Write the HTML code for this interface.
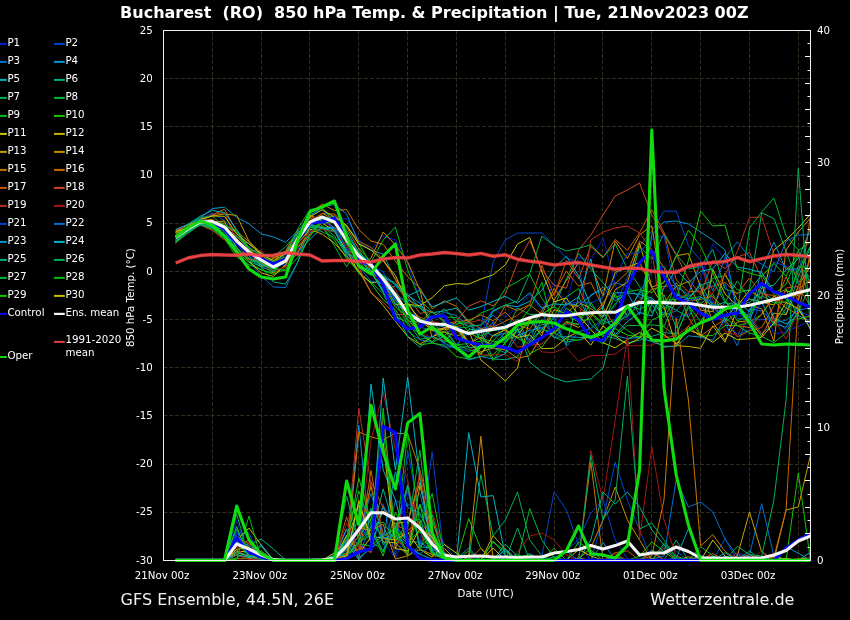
<!DOCTYPE html>
<html lang="en"><head><meta charset="utf-8"><title>Bucharest (RO) 850 hPa Temp. &amp; Precipitation</title>
<style>html,body{margin:0;padding:0;background:#000;overflow:hidden}body{width:850px;height:620px;position:relative}</style></head>
<body>
<svg width="850" height="620" viewBox="0 0 850 620" style="position:absolute;left:0;top:0;will-change:transform">
<rect width="850" height="620" fill="#000"/>
<g stroke="#312f20" stroke-width="1" stroke-dasharray="3.9,2" fill="none"><line x1="212.5" y1="30.5" x2="212.5" y2="560.4"/><line x1="261.5" y1="30.5" x2="261.5" y2="560.4"/><line x1="309.5" y1="30.5" x2="309.5" y2="560.4"/><line x1="358.5" y1="30.5" x2="358.5" y2="560.4"/><line x1="407.5" y1="30.5" x2="407.5" y2="560.4"/><line x1="456.5" y1="30.5" x2="456.5" y2="560.4"/><line x1="505.5" y1="30.5" x2="505.5" y2="560.4"/><line x1="554.5" y1="30.5" x2="554.5" y2="560.4"/><line x1="602.5" y1="30.5" x2="602.5" y2="560.4"/><line x1="651.5" y1="30.5" x2="651.5" y2="560.4"/><line x1="700.5" y1="30.5" x2="700.5" y2="560.4"/><line x1="749.5" y1="30.5" x2="749.5" y2="560.4"/><line x1="798.5" y1="30.5" x2="798.5" y2="560.4"/><line x1="163.5" y1="512.5" x2="810.5" y2="512.5"/><line x1="163.5" y1="464.5" x2="810.5" y2="464.5"/><line x1="163.5" y1="415.5" x2="810.5" y2="415.5"/><line x1="163.5" y1="367.5" x2="810.5" y2="367.5"/><line x1="163.5" y1="319.5" x2="810.5" y2="319.5"/><line x1="163.5" y1="271.5" x2="810.5" y2="271.5"/><line x1="163.5" y1="223.5" x2="810.5" y2="223.5"/><line x1="163.5" y1="175.5" x2="810.5" y2="175.5"/><line x1="163.5" y1="126.5" x2="810.5" y2="126.5"/><line x1="163.5" y1="78.5" x2="810.5" y2="78.5"/></g>
<defs><clipPath id="c"><rect x="163.5" y="30.5" width="647.0" height="531.5"/></clipPath></defs>
<g clip-path="url(#c)" fill="none" stroke-linejoin="round" stroke-linecap="butt">
<polyline points="175.7,242.3 187.9,231.9 200.1,225.4 212.3,224.8 224.5,229.8 236.7,240.9 249.0,246.7 261.2,258.3 273.4,266.4 285.6,264.6 297.8,249.2 310.0,232.8 322.2,220.4 334.4,218.4 346.6,218.8 358.8,239.6 371.0,250.0 383.2,236.0 395.4,240.0 407.7,262.0 419.9,300.0 432.1,324.6 444.3,346.2 456.5,345.3 468.7,331.8 480.9,333.0 493.1,308.0 505.3,317.5 517.5,307.4 529.7,294.7 541.9,310.1 554.1,282.7 566.4,303.6 578.6,257.0 590.8,260.5 603.0,238.3 615.2,284.9 627.4,319.3 639.6,301.2 651.8,306.1 664.0,313.1 676.2,317.7 688.4,313.7 700.6,278.5 712.8,244.5 725.0,258.8 737.3,314.6 749.5,317.3 761.7,301.9 773.9,334.0 786.1,331.8 798.3,326.3 810.5,321.5" stroke="#0020d0" stroke-width="1" />
<polyline points="175.7,235.0 187.9,227.0 200.1,219.9 212.3,212.9 224.5,220.6 236.7,233.8 249.0,249.8 261.2,252.5 273.4,261.6 285.6,265.7 297.8,253.8 310.0,233.0 322.2,221.7 334.4,218.6 346.6,239.8 358.8,260.8 371.0,266.6 383.2,271.6 395.4,297.9 407.7,299.1 419.9,327.1 432.1,330.3 444.3,337.3 456.5,344.4 468.7,333.1 480.9,327.6 493.1,262.0 505.3,240.0 517.5,233.0 529.7,233.0 541.9,233.0 554.1,245.0 566.4,258.0 578.6,262.0 590.8,341.6 603.0,316.5 615.2,306.3 627.4,277.5 639.6,246.0 651.8,231.1 664.0,211.1 676.2,211.1 688.4,245.6 700.6,260.7 712.8,307.2 725.0,283.6 737.3,318.3 749.5,320.0 761.7,319.7 773.9,318.9 786.1,329.7 798.3,311.0 810.5,316.1" stroke="#0048d0" stroke-width="1" />
<polyline points="175.7,238.9 187.9,228.3 200.1,221.6 212.3,221.8 224.5,232.1 236.7,246.9 249.0,261.2 261.2,276.0 273.4,287.0 285.6,287.5 297.8,262.0 310.0,222.2 322.2,217.6 334.4,230.9 346.6,253.3 358.8,264.8 371.0,272.3 383.2,292.0 395.4,316.3 407.7,331.1 419.9,339.8 432.1,342.5 444.3,346.9 456.5,347.3 468.7,351.6 480.9,346.3 493.1,321.5 505.3,342.1 517.5,326.6 529.7,340.1 541.9,311.7 554.1,338.0 566.4,324.1 578.6,323.6 590.8,294.7 603.0,289.8 615.2,282.7 627.4,286.3 639.6,297.5 651.8,299.4 664.0,314.9 676.2,311.1 688.4,296.4 700.6,287.9 712.8,310.8 725.0,323.2 737.3,345.8 749.5,308.8 761.7,310.9 773.9,322.9 786.1,320.2 798.3,310.1 810.5,307.8" stroke="#0070d0" stroke-width="1" />
<polyline points="175.7,229.9 187.9,225.6 200.1,218.3 212.3,208.5 224.5,207.2 236.7,217.3 249.0,223.8 261.2,233.9 273.4,237.0 285.6,242.2 297.8,231.1 310.0,216.2 322.2,207.0 334.4,204.5 346.6,214.0 358.8,243.2 371.0,250.2 383.2,254.2 395.4,279.6 407.7,295.7 419.9,303.0 432.1,324.0 444.3,327.0 456.5,345.4 468.7,329.7 480.9,329.0 493.1,336.1 505.3,333.2 517.5,329.5 529.7,341.4 541.9,328.8 554.1,318.3 566.4,302.9 578.6,305.7 590.8,295.7 603.0,287.2 615.2,300.9 627.4,292.8 639.6,314.9 651.8,235.0 664.0,222.0 676.2,221.0 688.4,224.0 700.6,232.0 712.8,240.0 725.0,250.0 737.3,312.1 749.5,317.6 761.7,334.1 773.9,323.4 786.1,327.4 798.3,304.9 810.5,330.1" stroke="#0098d0" stroke-width="1" />
<polyline points="175.7,237.2 187.9,228.7 200.1,223.3 212.3,224.1 224.5,225.7 236.7,239.8 249.0,253.9 261.2,263.2 273.4,266.9 285.6,262.3 297.8,251.6 310.0,239.4 322.2,227.3 334.4,227.4 346.6,237.5 358.8,257.9 371.0,271.7 383.2,291.1 395.4,285.6 407.7,299.8 419.9,306.2 432.1,312.8 444.3,310.9 456.5,308.1 468.7,322.9 480.9,339.6 493.1,310.6 505.3,305.1 517.5,306.7 529.7,301.5 541.9,290.1 554.1,268.0 566.4,256.3 578.6,275.9 590.8,305.8 603.0,316.0 615.2,292.7 627.4,292.8 639.6,294.4 651.8,298.1 664.0,308.8 676.2,294.7 688.4,298.9 700.6,283.6 712.8,306.6 725.0,321.1 737.3,302.4 749.5,311.6 761.7,284.6 773.9,318.2 786.1,323.9 798.3,315.6 810.5,321.7" stroke="#00b4c4" stroke-width="1" />
<polyline points="175.7,239.4 187.9,232.0 200.1,223.6 212.3,222.4 224.5,230.8 236.7,251.4 249.0,258.8 261.2,266.7 273.4,282.0 285.6,284.0 297.8,262.0 310.0,234.3 322.2,220.0 334.4,221.4 346.6,229.9 358.8,252.7 371.0,268.6 383.2,275.2 395.4,283.4 407.7,294.3 419.9,307.9 432.1,320.2 444.3,336.9 456.5,347.5 468.7,346.6 480.9,331.8 493.1,358.9 505.3,359.7 517.5,356.7 529.7,333.1 541.9,324.6 554.1,323.3 566.4,344.8 578.6,296.4 590.8,324.4 603.0,335.1 615.2,338.5 627.4,343.1 639.6,340.1 651.8,336.3 664.0,332.6 676.2,333.7 688.4,308.0 700.6,304.9 712.8,320.5 725.0,302.5 737.3,304.9 749.5,302.4 761.7,292.0 773.9,300.2 786.1,314.3 798.3,277.1 810.5,247.2" stroke="#00b088" stroke-width="1" />
<polyline points="175.7,231.9 187.9,225.1 200.1,221.5 212.3,221.5 224.5,227.8 236.7,237.3 249.0,243.6 261.2,252.8 273.4,262.2 285.6,261.0 297.8,246.8 310.0,230.7 322.2,221.0 334.4,221.7 346.6,242.9 358.8,257.1 371.0,272.2 383.2,289.8 395.4,301.7 407.7,324.9 419.9,333.7 432.1,342.7 444.3,335.8 456.5,324.6 468.7,319.2 480.9,340.3 493.1,344.5 505.3,332.5 517.5,308.0 529.7,314.4 541.9,314.4 554.1,306.7 566.4,278.9 578.6,253.4 590.8,269.1 603.0,282.8 615.2,297.7 627.4,292.9 639.6,246.3 651.8,259.2 664.0,233.2 676.2,254.1 688.4,269.1 700.6,266.1 712.8,249.5 725.0,288.9 737.3,293.3 749.5,289.5 761.7,212.7 773.9,218.6 786.1,251.5 798.3,283.6 810.5,259.1" stroke="#00b058" stroke-width="1" />
<polyline points="175.7,238.6 187.9,231.8 200.1,224.7 212.3,226.8 224.5,229.5 236.7,243.8 249.0,258.2 261.2,264.2 273.4,267.5 285.6,259.6 297.8,237.2 310.0,225.2 322.2,226.6 334.4,235.7 346.6,255.2 358.8,273.6 371.0,282.0 383.2,293.7 395.4,316.7 407.7,322.2 419.9,339.2 432.1,337.6 444.3,340.9 456.5,344.7 468.7,349.7 480.9,352.9 493.1,340.6 505.3,328.3 517.5,319.4 529.7,343.1 541.9,319.5 554.1,337.2 566.4,342.0 578.6,339.9 590.8,336.7 603.0,343.8 615.2,327.4 627.4,305.2 639.6,309.2 651.8,302.9 664.0,327.1 676.2,335.9 688.4,305.2 700.6,321.5 712.8,302.8 725.0,322.3 737.3,312.0 749.5,228.0 761.7,212.0 773.9,198.0 786.1,236.0 798.3,250.0 810.5,284.4" stroke="#00b834" stroke-width="1" />
<polyline points="175.7,240.3 187.9,231.0 200.1,224.8 212.3,229.1 224.5,238.7 236.7,257.1 249.0,264.7 261.2,269.7 273.4,273.1 285.6,252.0 297.8,230.3 310.0,218.2 322.2,225.5 334.4,245.8 346.6,266.8 358.8,248.0 371.0,262.0 383.2,240.0 395.4,227.0 407.7,270.0 419.9,300.0 432.1,311.7 444.3,321.1 456.5,324.0 468.7,322.2 480.9,313.1 493.1,308.3 505.3,288.4 517.5,281.7 529.7,274.1 541.9,298.5 554.1,315.3 566.4,296.8 578.6,288.6 590.8,312.6 603.0,323.4 615.2,320.6 627.4,330.5 639.6,338.0 651.8,320.0 664.0,314.4 676.2,282.5 688.4,298.8 700.6,296.6 712.8,278.4 725.0,275.7 737.3,289.8 749.5,290.7 761.7,275.0 773.9,294.4 786.1,284.1 798.3,254.4 810.5,307.6" stroke="#00c018" stroke-width="1" />
<polyline points="175.7,240.9 187.9,232.8 200.1,223.8 212.3,227.8 224.5,235.4 236.7,251.4 249.0,262.4 261.2,269.8 273.4,274.4 285.6,269.0 297.8,247.4 310.0,233.6 322.2,227.7 334.4,240.0 346.6,258.5 358.8,272.1 371.0,283.3 383.2,299.8 395.4,309.7 407.7,329.0 419.9,344.9 432.1,343.1 444.3,345.2 456.5,356.6 468.7,359.1 480.9,356.5 493.1,354.7 505.3,342.7 517.5,329.0 529.7,353.9 541.9,347.0 554.1,331.0 566.4,308.1 578.6,316.5 590.8,313.5 603.0,325.5 615.2,294.3 627.4,316.1 639.6,304.1 651.8,300.3 664.0,317.4 676.2,297.6 688.4,304.9 700.6,336.4 712.8,335.4 725.0,325.5 737.3,325.7 749.5,322.1 761.7,314.5 773.9,296.6 786.1,288.9 798.3,319.1 810.5,315.9" stroke="#18c800" stroke-width="1" />
<polyline points="175.7,232.4 187.9,225.3 200.1,221.5 212.3,223.7 224.5,226.3 236.7,238.5 249.0,252.0 261.2,266.8 273.4,258.0 285.6,253.2 297.8,233.0 310.0,223.7 322.2,223.0 334.4,230.8 346.6,250.9 358.8,272.0 371.0,283.0 383.2,280.9 395.4,304.7 407.7,304.4 419.9,305.5 432.1,297.7 444.3,285.8 456.5,283.6 468.7,284.2 480.9,279.0 493.1,274.8 505.3,264.9 517.5,244.1 529.7,237.5 541.9,272.0 554.1,301.9 566.4,298.0 578.6,315.0 590.8,329.6 603.0,342.7 615.2,347.8 627.4,339.7 639.6,332.5 651.8,339.2 664.0,347.0 676.2,346.0 688.4,326.4 700.6,336.7 712.8,269.5 725.0,293.8 737.3,306.0 749.5,290.2 761.7,298.7 773.9,250.0 786.1,240.0 798.3,228.0 810.5,214.0" stroke="#c8c800" stroke-width="1" />
<polyline points="175.7,242.5 187.9,232.1 200.1,223.4 212.3,221.8 224.5,221.1 236.7,248.2 249.0,261.2 261.2,272.9 273.4,276.4 285.6,264.6 297.8,243.1 310.0,229.3 322.2,234.2 334.4,243.1 346.6,256.8 358.8,270.8 371.0,292.2 383.2,305.5 395.4,321.4 407.7,336.5 419.9,344.2 432.1,336.8 444.3,332.1 456.5,336.2 468.7,330.7 480.9,360.0 493.1,370.0 505.3,381.0 517.5,368.0 529.7,319.1 541.9,336.2 554.1,332.4 566.4,322.0 578.6,327.5 590.8,315.3 603.0,307.2 615.2,272.4 627.4,267.7 639.6,262.2 651.8,287.6 664.0,307.1 676.2,345.6 688.4,346.5 700.6,348.3 712.8,325.8 725.0,342.2 737.3,308.3 749.5,299.0 761.7,302.0 773.9,305.0 786.1,290.4 798.3,295.7 810.5,287.9" stroke="#c8b400" stroke-width="1" />
<polyline points="175.7,233.5 187.9,228.3 200.1,219.2 212.3,215.9 224.5,214.0 236.7,215.4 249.0,241.4 261.2,253.3 273.4,269.0 285.6,260.7 297.8,236.9 310.0,215.2 322.2,221.1 334.4,227.3 346.6,240.9 358.8,258.8 371.0,272.2 383.2,280.5 395.4,295.0 407.7,312.2 419.9,319.1 432.1,330.7 444.3,329.3 456.5,328.3 468.7,343.8 480.9,337.2 493.1,346.3 505.3,339.0 517.5,336.2 529.7,318.7 541.9,332.9 554.1,309.7 566.4,313.5 578.6,302.2 590.8,308.5 603.0,317.3 615.2,289.7 627.4,282.2 639.6,243.2 651.8,287.2 664.0,282.6 676.2,255.7 688.4,253.6 700.6,286.8 712.8,322.3 725.0,340.0 737.3,322.0 749.5,320.6 761.7,335.9 773.9,313.2 786.1,314.6 798.3,286.3 810.5,266.1" stroke="#c8a000" stroke-width="1" />
<polyline points="175.7,231.7 187.9,225.0 200.1,220.6 212.3,219.3 224.5,227.5 236.7,236.3 249.0,248.4 261.2,262.5 273.4,273.3 285.6,266.1 297.8,252.5 310.0,227.2 322.2,213.0 334.4,220.4 346.6,234.3 358.8,268.4 371.0,258.0 383.2,232.0 395.4,245.0 407.7,262.0 419.9,290.0 432.1,337.4 444.3,327.3 456.5,327.4 468.7,342.9 480.9,351.9 493.1,348.0 505.3,349.8 517.5,358.2 529.7,355.6 541.9,335.7 554.1,300.1 566.4,280.5 578.6,262.7 590.8,264.3 603.0,296.2 615.2,240.9 627.4,258.5 639.6,234.9 651.8,225.7 664.0,302.9 676.2,286.6 688.4,281.4 700.6,310.2 712.8,311.7 725.0,273.0 737.3,300.3 749.5,305.3 761.7,308.8 773.9,341.1 786.1,250.0 798.3,232.0 810.5,218.0" stroke="#c88c00" stroke-width="1" />
<polyline points="175.7,232.4 187.9,226.7 200.1,220.4 212.3,215.0 224.5,209.3 236.7,231.2 249.0,241.7 261.2,255.4 273.4,257.3 285.6,259.1 297.8,244.3 310.0,213.0 322.2,204.2 334.4,210.5 346.6,209.6 358.8,229.7 371.0,241.0 383.2,244.3 395.4,261.2 407.7,276.8 419.9,288.1 432.1,308.9 444.3,300.8 456.5,306.4 468.7,321.9 480.9,328.6 493.1,326.1 505.3,305.6 517.5,310.6 529.7,304.7 541.9,314.5 554.1,288.3 566.4,304.2 578.6,306.7 590.8,317.5 603.0,303.3 615.2,283.5 627.4,272.5 639.6,241.2 651.8,249.4 664.0,267.7 676.2,298.3 688.4,300.5 700.6,299.3 712.8,296.3 725.0,309.7 737.3,325.8 749.5,327.5 761.7,314.3 773.9,295.7 786.1,308.1 798.3,314.3 810.5,251.1" stroke="#c87800" stroke-width="1" />
<polyline points="175.7,239.7 187.9,230.9 200.1,222.8 212.3,224.9 224.5,235.6 236.7,249.1 249.0,259.3 261.2,260.7 273.4,258.9 285.6,261.1 297.8,240.8 310.0,220.6 322.2,213.5 334.4,214.0 346.6,225.9 358.8,241.4 371.0,247.4 383.2,259.5 395.4,279.6 407.7,304.6 419.9,318.5 432.1,327.8 444.3,332.2 456.5,321.7 468.7,320.3 480.9,314.8 493.1,320.7 505.3,312.1 517.5,324.8 529.7,329.3 541.9,310.5 554.1,292.9 566.4,271.2 578.6,286.1 590.8,282.5 603.0,307.3 615.2,326.5 627.4,308.3 639.6,300.2 651.8,289.3 664.0,286.2 676.2,285.4 688.4,317.8 700.6,336.1 712.8,327.3 725.0,319.3 737.3,336.8 749.5,330.7 761.7,327.6 773.9,305.5 786.1,276.8 798.3,300.9 810.5,256.9" stroke="#c86800" stroke-width="1" />
<polyline points="175.7,241.7 187.9,232.0 200.1,222.6 212.3,222.2 224.5,223.2 236.7,236.2 249.0,250.0 261.2,257.4 273.4,265.2 285.6,262.1 297.8,251.3 310.0,234.1 322.2,223.0 334.4,215.2 346.6,227.2 358.8,248.8 371.0,271.2 383.2,260.6 395.4,278.8 407.7,296.4 419.9,313.4 432.1,311.4 444.3,320.7 456.5,330.0 468.7,332.5 480.9,339.4 493.1,327.2 505.3,321.1 517.5,315.4 529.7,305.0 541.9,265.3 554.1,295.6 566.4,260.3 578.6,278.6 590.8,246.4 603.0,257.7 615.2,239.4 627.4,250.3 639.6,232.7 651.8,209.7 664.0,232.7 676.2,279.7 688.4,291.8 700.6,291.1 712.8,286.1 725.0,282.4 737.3,293.8 749.5,277.9 761.7,294.1 773.9,295.4 786.1,303.6 798.3,289.0 810.5,279.5" stroke="#c85800" stroke-width="1" />
<polyline points="175.7,242.9 187.9,231.3 200.1,224.9 212.3,230.4 224.5,239.8 236.7,251.5 249.0,253.6 261.2,263.7 273.4,267.0 285.6,250.4 297.8,230.2 310.0,217.8 322.2,217.7 334.4,228.2 346.6,248.1 358.8,267.3 371.0,293.2 383.2,302.5 395.4,314.5 407.7,314.5 419.9,317.3 432.1,321.5 444.3,325.1 456.5,321.1 468.7,306.1 480.9,300.9 493.1,305.9 505.3,294.3 517.5,262.7 529.7,240.7 541.9,269.9 554.1,285.3 566.4,288.2 578.6,250.0 590.8,235.0 603.0,215.0 615.2,196.0 627.4,190.0 639.6,183.0 651.8,215.0 664.0,235.0 676.2,255.0 688.4,278.9 700.6,294.7 712.8,260.4 725.0,268.5 737.3,257.2 749.5,252.5 761.7,278.2 773.9,323.3 786.1,288.0 798.3,286.3 810.5,306.4" stroke="#c84824" stroke-width="1" />
<polyline points="175.7,229.7 187.9,226.4 200.1,221.8 212.3,214.2 224.5,212.7 236.7,240.2 249.0,250.6 261.2,250.6 273.4,264.0 285.6,256.5 297.8,236.3 310.0,223.4 322.2,222.9 334.4,221.3 346.6,243.7 358.8,257.4 371.0,271.5 383.2,276.5 395.4,289.4 407.7,314.2 419.9,325.5 432.1,322.2 444.3,324.0 456.5,326.5 468.7,322.6 480.9,320.0 493.1,327.5 505.3,330.6 517.5,347.1 529.7,345.3 541.9,344.0 554.1,333.4 566.4,323.3 578.6,324.2 590.8,240.0 603.0,232.0 615.2,228.0 627.4,226.0 639.6,233.0 651.8,250.0 664.0,337.6 676.2,336.0 688.4,326.3 700.6,308.7 712.8,292.7 725.0,274.9 737.3,251.7 749.5,217.5 761.7,217.0 773.9,254.2 786.1,267.5 798.3,274.4 810.5,283.3" stroke="#b83020" stroke-width="1" />
<polyline points="175.7,242.9 187.9,232.2 200.1,224.4 212.3,222.1 224.5,229.0 236.7,236.4 249.0,248.3 261.2,265.5 273.4,270.2 285.6,267.6 297.8,246.2 310.0,231.1 322.2,229.6 334.4,231.9 346.6,245.4 358.8,268.3 371.0,271.7 383.2,285.8 395.4,305.8 407.7,321.0 419.9,332.4 432.1,337.8 444.3,340.1 456.5,330.2 468.7,346.9 480.9,354.9 493.1,355.0 505.3,354.5 517.5,361.5 529.7,337.7 541.9,352.0 554.1,352.5 566.4,347.5 578.6,361.4 590.8,355.8 603.0,355.4 615.2,353.9 627.4,345.6 639.6,345.7 651.8,345.1 664.0,339.0 676.2,298.4 688.4,293.6 700.6,263.5 712.8,299.1 725.0,331.2 737.3,335.4 749.5,314.5 761.7,333.5 773.9,318.7 786.1,339.1 798.3,310.2 810.5,322.7" stroke="#a01818" stroke-width="1" />
<polyline points="175.7,239.9 187.9,229.5 200.1,219.9 212.3,221.5 224.5,230.2 236.7,240.8 249.0,254.3 261.2,259.6 273.4,261.9 285.6,260.3 297.8,238.5 310.0,224.7 322.2,221.7 334.4,226.9 346.6,248.8 358.8,252.9 371.0,264.9 383.2,275.4 395.4,299.9 407.7,314.3 419.9,335.8 432.1,337.5 444.3,320.6 456.5,326.4 468.7,333.5 480.9,331.4 493.1,322.9 505.3,340.7 517.5,332.0 529.7,341.0 541.9,337.8 554.1,322.2 566.4,304.9 578.6,301.8 590.8,303.3 603.0,297.1 615.2,276.8 627.4,253.5 639.6,252.6 651.8,239.1 664.0,235.7 676.2,293.0 688.4,300.6 700.6,297.5 712.8,302.0 725.0,322.0 737.3,334.3 749.5,330.2 761.7,299.3 773.9,261.9 786.1,266.3 798.3,271.8 810.5,226.6" stroke="#0040d0" stroke-width="1" />
<polyline points="175.7,241.3 187.9,232.3 200.1,223.8 212.3,224.5 224.5,234.3 236.7,244.1 249.0,253.3 261.2,262.4 273.4,262.6 285.6,254.1 297.8,232.1 310.0,214.4 322.2,209.9 334.4,220.2 346.6,250.9 358.8,266.3 371.0,281.3 383.2,283.3 395.4,304.4 407.7,312.4 419.9,322.6 432.1,317.9 444.3,312.4 456.5,315.6 468.7,326.3 480.9,325.5 493.1,315.0 505.3,325.4 517.5,322.8 529.7,323.1 541.9,328.3 554.1,316.4 566.4,346.5 578.6,331.7 590.8,328.3 603.0,319.8 615.2,327.5 627.4,312.4 639.6,292.7 651.8,270.4 664.0,266.2 676.2,286.8 688.4,294.4 700.6,262.2 712.8,290.8 725.0,258.0 737.3,241.8 749.5,257.1 761.7,264.2 773.9,271.7 786.1,241.0 798.3,235.1 810.5,234.5" stroke="#0070d0" stroke-width="1" />
<polyline points="175.7,240.8 187.9,231.6 200.1,225.0 212.3,227.9 224.5,235.8 236.7,243.6 249.0,256.1 261.2,265.3 273.4,269.0 285.6,261.9 297.8,241.1 310.0,226.6 322.2,228.4 334.4,228.4 346.6,256.4 358.8,265.6 371.0,270.2 383.2,281.4 395.4,300.3 407.7,311.7 419.9,318.8 432.1,326.4 444.3,343.2 456.5,348.8 468.7,359.9 480.9,356.5 493.1,359.0 505.3,353.8 517.5,335.7 529.7,330.4 541.9,327.7 554.1,337.5 566.4,336.6 578.6,337.4 590.8,337.7 603.0,333.2 615.2,335.7 627.4,338.5 639.6,337.4 651.8,341.6 664.0,346.1 676.2,346.5 688.4,335.8 700.6,337.1 712.8,340.3 725.0,317.6 737.3,304.8 749.5,317.8 761.7,269.3 773.9,242.1 786.1,269.7 798.3,268.7 810.5,281.1" stroke="#0098d0" stroke-width="1" />
<polyline points="175.7,229.5 187.9,224.3 200.1,216.3 212.3,210.4 224.5,212.6 236.7,229.5 249.0,251.1 261.2,265.3 273.4,262.7 285.6,260.8 297.8,240.5 310.0,224.9 322.2,218.8 334.4,217.3 346.6,234.5 358.8,252.1 371.0,263.2 383.2,276.5 395.4,284.8 407.7,295.9 419.9,290.2 432.1,306.8 444.3,302.3 456.5,298.0 468.7,310.1 480.9,306.7 493.1,301.3 505.3,296.3 517.5,303.2 529.7,292.8 541.9,308.1 554.1,303.8 566.4,305.0 578.6,296.8 590.8,259.1 603.0,310.8 615.2,334.8 627.4,321.4 639.6,312.5 651.8,315.9 664.0,287.7 676.2,269.5 688.4,283.0 700.6,271.3 712.8,268.8 725.0,253.6 737.3,267.1 749.5,269.3 761.7,272.4 773.9,291.8 786.1,298.8 798.3,310.5 810.5,324.2" stroke="#00b4c8" stroke-width="1" />
<polyline points="175.7,241.7 187.9,231.2 200.1,224.4 212.3,226.6 224.5,235.7 236.7,247.4 249.0,261.3 261.2,266.7 273.4,271.9 285.6,260.1 297.8,234.5 310.0,223.9 322.2,228.2 334.4,231.3 346.6,253.2 358.8,259.6 371.0,271.0 383.2,292.1 395.4,312.6 407.7,336.9 419.9,347.3 432.1,336.0 444.3,342.5 456.5,327.4 468.7,347.9 480.9,346.1 493.1,347.8 505.3,352.7 517.5,328.1 529.7,362.0 541.9,372.0 554.1,378.0 566.4,382.0 578.6,380.0 590.8,379.0 603.0,368.0 615.2,322.2 627.4,316.3 639.6,291.4 651.8,302.4 664.0,303.9 676.2,310.1 688.4,317.1 700.6,296.8 712.8,306.3 725.0,302.2 737.3,309.4 749.5,320.7 761.7,288.1 773.9,285.2 786.1,269.7 798.3,258.8 810.5,228.8" stroke="#00b488" stroke-width="1" />
<polyline points="175.7,235.6 187.9,224.6 200.1,217.6 212.3,216.2 224.5,226.4 236.7,230.7 249.0,247.5 261.2,254.7 273.4,256.8 285.6,246.8 297.8,232.5 310.0,226.7 322.2,231.8 334.4,237.6 346.6,251.4 358.8,252.6 371.0,274.4 383.2,275.7 395.4,292.6 407.7,305.0 419.9,307.4 432.1,318.0 444.3,308.8 456.5,321.3 468.7,326.3 480.9,324.9 493.1,311.5 505.3,305.1 517.5,301.1 529.7,273.9 541.9,236.0 554.1,245.6 566.4,250.9 578.6,248.4 590.8,244.7 603.0,257.1 615.2,243.9 627.4,269.1 639.6,286.4 651.8,312.9 664.0,294.7 676.2,328.0 688.4,299.0 700.6,285.2 712.8,281.0 725.0,302.5 737.3,280.9 749.5,299.2 761.7,302.3 773.9,325.6 786.1,308.3 798.3,265.5 810.5,277.6" stroke="#00b058" stroke-width="1" />
<polyline points="175.7,242.7 187.9,233.3 200.1,224.7 212.3,228.4 224.5,237.2 236.7,248.0 249.0,261.0 261.2,262.0 273.4,270.9 285.6,256.6 297.8,228.6 310.0,209.5 322.2,207.7 334.4,221.1 346.6,240.1 358.8,252.0 371.0,267.7 383.2,279.8 395.4,296.6 407.7,321.1 419.9,321.8 432.1,311.5 444.3,322.7 456.5,326.8 468.7,327.9 480.9,335.7 493.1,330.4 505.3,329.0 517.5,338.5 529.7,344.1 541.9,329.4 554.1,332.9 566.4,339.1 578.6,340.2 590.8,335.8 603.0,331.2 615.2,336.5 627.4,325.3 639.6,325.7 651.8,324.9 664.0,326.3 676.2,299.7 688.4,294.8 700.6,303.8 712.8,293.9 725.0,318.8 737.3,325.5 749.5,333.0 761.7,336.5 773.9,342.6 786.1,332.8 798.3,311.2 810.5,286.0" stroke="#00b830" stroke-width="1" />
<polyline points="175.7,240.8 187.9,231.7 200.1,222.0 212.3,225.6 224.5,230.3 236.7,236.4 249.0,248.0 261.2,255.7 273.4,261.5 285.6,257.1 297.8,238.1 310.0,228.1 322.2,223.0 334.4,221.8 346.6,244.0 358.8,262.3 371.0,274.0 383.2,286.2 395.4,307.1 407.7,316.7 419.9,328.9 432.1,318.0 444.3,316.8 456.5,317.6 468.7,332.0 480.9,338.8 493.1,341.2 505.3,342.3 517.5,324.9 529.7,308.8 541.9,282.3 554.1,333.2 566.4,321.3 578.6,324.7 590.8,302.3 603.0,321.1 615.2,303.7 627.4,291.6 639.6,289.8 651.8,292.5 664.0,281.8 676.2,256.5 688.4,230.1 700.6,246.1 712.8,272.8 725.0,300.3 737.3,321.1 749.5,314.4 761.7,295.6 773.9,303.0 786.1,301.8 798.3,271.0 810.5,245.5" stroke="#00c010" stroke-width="1" />
<polyline points="175.7,235.2 187.9,229.0 200.1,223.1 212.3,222.1 224.5,224.0 236.7,232.8 249.0,248.2 261.2,262.9 273.4,268.2 285.6,270.6 297.8,257.4 310.0,236.3 322.2,220.1 334.4,216.4 346.6,226.3 358.8,243.2 371.0,264.7 383.2,276.4 395.4,296.5 407.7,319.3 419.9,332.7 432.1,341.7 444.3,331.1 456.5,344.8 468.7,343.5 480.9,341.1 493.1,360.6 505.3,343.0 517.5,330.5 529.7,323.5 541.9,314.0 554.1,306.9 566.4,315.2 578.6,321.9 590.8,318.6 603.0,337.2 615.2,328.6 627.4,335.1 639.6,336.8 651.8,303.6 664.0,300.3 676.2,299.4 688.4,260.6 700.6,211.2 712.8,226.0 725.0,225.2 737.3,268.8 749.5,273.1 761.7,276.3 773.9,263.3 786.1,276.3 798.3,250.7 810.5,241.7" stroke="#10c800" stroke-width="1" />
<polyline points="175.7,231.1 187.9,229.4 200.1,219.9 212.3,216.0 224.5,216.3 236.7,233.8 249.0,244.0 261.2,253.9 273.4,260.6 285.6,253.6 297.8,237.6 310.0,216.9 322.2,209.7 334.4,217.0 346.6,225.1 358.8,244.0 371.0,250.0 383.2,260.7 395.4,275.4 407.7,302.9 419.9,320.5 432.1,329.9 444.3,328.2 456.5,326.4 468.7,341.7 480.9,354.5 493.1,335.3 505.3,329.9 517.5,337.6 529.7,334.7 541.9,348.7 554.1,348.2 566.4,337.8 578.6,331.5 590.8,345.2 603.0,325.9 615.2,335.9 627.4,344.7 639.6,338.1 651.8,328.2 664.0,334.6 676.2,343.8 688.4,330.0 700.6,334.6 712.8,342.3 725.0,333.1 737.3,339.6 749.5,338.8 761.7,337.3 773.9,323.2 786.1,302.5 798.3,308.4 810.5,328.7" stroke="#c8c000" stroke-width="1" />
<polyline points="175.7,560.4 187.9,560.4 200.1,560.4 212.3,560.4 224.5,560.4 236.7,520.6 249.0,556.6 261.2,554.9 273.4,559.8 285.6,560.4 297.8,560.4 310.0,560.4 322.2,560.4 334.4,556.3 346.6,553.1 358.8,552.5 371.0,509.6 383.2,541.5 395.4,558.5 407.7,529.4 419.9,524.7 432.1,546.7 444.3,558.1 456.5,560.4 468.7,560.4 480.9,560.4 493.1,560.4 505.3,550.6 517.5,560.4 529.7,560.4 541.9,560.4 554.1,559.8 566.4,560.4 578.6,560.4 590.8,560.4 603.0,560.4 615.2,560.4 627.4,560.4 639.6,560.4 651.8,560.4 664.0,560.4 676.2,560.4 688.4,560.4 700.6,560.4 712.8,560.4 725.0,560.4 737.3,552.7 749.5,556.8 761.7,560.4 773.9,560.4 786.1,560.4 798.3,560.4 810.5,560.4" stroke="#0020d0" stroke-width="1" />
<polyline points="175.7,560.4 187.9,560.4 200.1,560.4 212.3,560.4 224.5,560.4 236.7,534.0 249.0,533.2 261.2,560.1 273.4,559.1 285.6,560.4 297.8,560.4 310.0,560.4 322.2,560.4 334.4,559.8 346.6,529.7 358.8,543.5 371.0,552.5 383.2,503.7 395.4,556.6 407.7,450.9 419.9,516.9 432.1,521.6 444.3,544.1 456.5,560.4 468.7,560.4 480.9,559.8 493.1,560.4 505.3,560.4 517.5,560.4 529.7,560.4 541.9,556.0 554.1,492.0 566.4,510.0 578.6,545.0 590.8,560.4 603.0,520.0 615.2,462.0 627.4,500.0 639.6,530.0 651.8,560.4 664.0,545.2 676.2,551.2 688.4,560.4 700.6,560.4 712.8,560.4 725.0,538.7 737.3,560.4 749.5,554.9 761.7,560.4 773.9,560.4 786.1,560.4 798.3,560.4 810.5,560.4" stroke="#0048d0" stroke-width="1" />
<polyline points="175.7,560.4 187.9,560.4 200.1,560.4 212.3,560.4 224.5,560.4 236.7,536.0 249.0,548.3 261.2,554.0 273.4,560.1 285.6,560.4 297.8,560.4 310.0,560.4 322.2,560.4 334.4,553.6 346.6,539.4 358.8,554.5 371.0,526.2 383.2,552.2 395.4,500.3 407.7,506.2 419.9,493.5 432.1,541.7 444.3,552.8 456.5,560.4 468.7,560.4 480.9,560.4 493.1,560.4 505.3,549.6 517.5,560.4 529.7,560.4 541.9,560.4 554.1,556.7 566.4,560.4 578.6,560.4 590.8,560.4 603.0,560.4 615.2,560.4 627.4,560.4 639.6,560.4 651.8,559.1 664.0,556.0 676.2,479.5 688.4,507.0 700.6,502.0 712.8,512.0 725.0,539.0 737.3,556.0 749.5,555.0 761.7,503.7 773.9,556.0 786.1,560.4 798.3,560.4 810.5,559.4" stroke="#0070d0" stroke-width="1" />
<polyline points="175.7,560.4 187.9,560.4 200.1,560.4 212.3,560.4 224.5,560.4 236.7,529.0 249.0,556.4 261.2,556.0 273.4,559.8 285.6,560.4 297.8,560.4 310.0,560.4 322.2,560.4 334.4,559.2 346.6,548.8 358.8,425.2 371.0,548.4 383.2,506.1 395.4,525.5 407.7,541.4 419.9,542.4 432.1,549.7 444.3,553.8 456.5,559.1 468.7,548.0 480.9,560.4 493.1,560.4 505.3,560.4 517.5,560.4 529.7,560.4 541.9,559.0 554.1,560.4 566.4,560.4 578.6,558.9 590.8,560.4 603.0,560.4 615.2,557.3 627.4,560.4 639.6,560.4 651.8,560.4 664.0,560.4 676.2,560.4 688.4,560.4 700.6,560.4 712.8,560.4 725.0,556.5 737.3,559.6 749.5,559.5 761.7,560.4 773.9,560.4 786.1,546.8 798.3,553.2 810.5,560.4" stroke="#0098d0" stroke-width="1" />
<polyline points="175.7,560.4 187.9,560.4 200.1,560.4 212.3,560.4 224.5,560.4 236.7,555.4 249.0,556.9 261.2,556.7 273.4,559.4 285.6,560.4 297.8,560.4 310.0,560.4 322.2,560.4 334.4,556.5 346.6,528.9 358.8,553.9 371.0,384.0 383.2,470.0 395.4,500.0 407.7,547.7 419.9,554.3 432.1,559.1 444.3,559.3 456.5,560.4 468.7,560.4 480.9,560.4 493.1,560.4 505.3,560.4 517.5,560.4 529.7,559.5 541.9,560.4 554.1,560.4 566.4,560.4 578.6,560.4 590.8,560.4 603.0,560.4 615.2,559.1 627.4,560.4 639.6,560.4 651.8,560.4 664.0,560.4 676.2,560.4 688.4,560.4 700.6,555.4 712.8,560.4 725.0,560.4 737.3,560.4 749.5,560.4 761.7,560.4 773.9,554.6 786.1,560.4 798.3,560.4 810.5,552.2" stroke="#00b4c4" stroke-width="1" />
<polyline points="175.7,560.4 187.9,560.4 200.1,560.4 212.3,560.4 224.5,560.4 236.7,542.2 249.0,545.0 261.2,539.0 273.4,549.0 285.6,560.0 297.8,560.4 310.0,560.4 322.2,560.4 334.4,558.8 346.6,558.0 358.8,502.2 371.0,537.0 383.2,488.9 395.4,532.1 407.7,543.4 419.9,504.1 432.1,534.1 444.3,552.9 456.5,559.0 468.7,560.4 480.9,560.4 493.1,560.4 505.3,560.4 517.5,560.4 529.7,558.2 541.9,560.4 554.1,560.4 566.4,560.4 578.6,560.4 590.8,560.4 603.0,560.4 615.2,560.4 627.4,560.4 639.6,560.4 651.8,549.9 664.0,560.4 676.2,540.1 688.4,560.4 700.6,558.6 712.8,560.4 725.0,560.4 737.3,560.4 749.5,560.4 761.7,559.1 773.9,560.4 786.1,560.4 798.3,560.4 810.5,559.7" stroke="#00b088" stroke-width="1" />
<polyline points="175.7,560.4 187.9,560.4 200.1,560.4 212.3,560.4 224.5,560.4 236.7,514.1 249.0,557.8 261.2,546.2 273.4,560.1 285.6,560.4 297.8,560.4 310.0,560.4 322.2,560.4 334.4,558.7 346.6,550.3 358.8,516.6 371.0,541.5 383.2,550.2 395.4,531.1 407.7,556.0 419.9,546.0 432.1,537.5 444.3,556.2 456.5,560.4 468.7,560.4 480.9,560.4 493.1,560.4 505.3,560.4 517.5,528.0 529.7,560.4 541.9,560.4 554.1,560.4 566.4,560.4 578.6,560.4 590.8,560.4 603.0,560.4 615.2,560.4 627.4,560.4 639.6,560.4 651.8,560.4 664.0,560.4 676.2,560.4 688.4,560.4 700.6,560.4 712.8,560.4 725.0,559.9 737.3,560.4 749.5,550.9 761.7,560.4 773.9,560.4 786.1,560.0 798.3,560.4 810.5,560.4" stroke="#00b058" stroke-width="1" />
<polyline points="175.7,560.4 187.9,560.4 200.1,560.4 212.3,560.4 224.5,560.4 236.7,539.8 249.0,556.5 261.2,557.6 273.4,559.7 285.6,560.4 297.8,560.4 310.0,560.4 322.2,560.4 334.4,556.7 346.6,536.4 358.8,535.3 371.0,520.0 383.2,428.2 395.4,544.4 407.7,527.8 419.9,450.0 432.1,552.0 444.3,559.1 456.5,560.4 468.7,560.4 480.9,560.4 493.1,540.9 505.3,555.3 517.5,560.4 529.7,560.4 541.9,560.4 554.1,557.1 566.4,560.4 578.6,560.4 590.8,560.4 603.0,560.4 615.2,560.4 627.4,560.4 639.6,560.4 651.8,560.4 664.0,560.4 676.2,560.4 688.4,560.4 700.6,546.7 712.8,555.6 725.0,560.4 737.3,560.4 749.5,560.4 761.7,560.4 773.9,560.4 786.1,560.4 798.3,560.4 810.5,560.4" stroke="#00b834" stroke-width="1" />
<polyline points="175.7,560.4 187.9,560.4 200.1,560.4 212.3,560.4 224.5,560.4 236.7,558.0 249.0,549.7 261.2,559.7 273.4,558.9 285.6,560.4 297.8,560.4 310.0,560.4 322.2,560.4 334.4,559.4 346.6,539.2 358.8,543.8 371.0,546.0 383.2,535.3 395.4,530.2 407.7,540.8 419.9,531.7 432.1,553.0 444.3,554.7 456.5,560.4 468.7,550.8 480.9,560.4 493.1,560.0 505.3,560.4 517.5,560.4 529.7,560.4 541.9,560.4 554.1,560.4 566.4,560.4 578.6,560.4 590.8,560.4 603.0,560.4 615.2,560.4 627.4,560.4 639.6,560.4 651.8,558.7 664.0,559.6 676.2,558.6 688.4,560.4 700.6,560.4 712.8,560.4 725.0,560.4 737.3,560.4 749.5,560.4 761.7,560.4 773.9,560.4 786.1,560.4 798.3,560.4 810.5,560.4" stroke="#00c018" stroke-width="1" />
<polyline points="175.7,560.4 187.9,560.4 200.1,560.4 212.3,560.4 224.5,560.4 236.7,526.4 249.0,558.5 261.2,551.1 273.4,559.4 285.6,560.4 297.8,560.4 310.0,560.4 322.2,560.4 334.4,558.3 346.6,552.8 358.8,543.9 371.0,528.9 383.2,556.0 395.4,512.5 407.7,533.1 419.9,524.3 432.1,554.9 444.3,555.3 456.5,560.4 468.7,518.5 480.9,548.9 493.1,560.4 505.3,560.4 517.5,554.3 529.7,560.4 541.9,560.4 554.1,548.2 566.4,560.4 578.6,560.4 590.8,560.4 603.0,560.4 615.2,560.4 627.4,560.4 639.6,560.4 651.8,560.4 664.0,560.4 676.2,560.4 688.4,560.4 700.6,560.4 712.8,560.4 725.0,560.4 737.3,558.7 749.5,560.4 761.7,560.4 773.9,560.4 786.1,560.4 798.3,560.4 810.5,560.4" stroke="#18c800" stroke-width="1" />
<polyline points="175.7,560.4 187.9,560.4 200.1,560.4 212.3,560.4 224.5,560.4 236.7,551.7 249.0,551.3 261.2,558.7 273.4,560.0 285.6,560.4 297.8,560.4 310.0,560.4 322.2,560.4 334.4,559.4 346.6,535.2 358.8,553.8 371.0,537.0 383.2,537.9 395.4,540.1 407.7,532.4 419.9,549.3 432.1,557.1 444.3,544.4 456.5,553.2 468.7,560.4 480.9,560.4 493.1,560.4 505.3,560.4 517.5,560.4 529.7,560.4 541.9,560.4 554.1,560.4 566.4,560.4 578.6,549.5 590.8,555.9 603.0,560.4 615.2,560.4 627.4,560.4 639.6,560.4 651.8,560.4 664.0,560.4 676.2,560.4 688.4,560.4 700.6,560.4 712.8,540.0 725.0,556.2 737.3,560.4 749.5,560.4 761.7,560.4 773.9,560.4 786.1,560.4 798.3,560.4 810.5,560.4" stroke="#c8c800" stroke-width="1" />
<polyline points="175.7,560.4 187.9,560.4 200.1,560.4 212.3,560.4 224.5,560.4 236.7,540.0 249.0,528.0 261.2,545.0 273.4,560.3 285.6,560.4 297.8,560.4 310.0,560.4 322.2,560.4 334.4,552.8 346.6,541.3 358.8,505.5 371.0,535.9 383.2,511.5 395.4,523.4 407.7,521.9 419.9,482.4 432.1,540.9 444.3,548.4 456.5,560.4 468.7,560.4 480.9,560.4 493.1,535.7 505.3,549.1 517.5,560.4 529.7,560.4 541.9,560.4 554.1,560.4 566.4,560.4 578.6,557.9 590.8,560.4 603.0,560.4 615.2,560.4 627.4,560.4 639.6,560.4 651.8,560.4 664.0,560.4 676.2,560.4 688.4,560.4 700.6,560.4 712.8,560.4 725.0,560.4 737.3,560.4 749.5,560.4 761.7,560.4 773.9,556.9 786.1,560.4 798.3,560.4 810.5,559.9" stroke="#c8b400" stroke-width="1" />
<polyline points="175.7,560.4 187.9,560.4 200.1,560.4 212.3,560.4 224.5,560.4 236.7,553.0 249.0,555.5 261.2,555.9 273.4,559.9 285.6,560.4 297.8,560.4 310.0,560.4 322.2,560.4 334.4,556.6 346.6,549.4 358.8,536.4 371.0,486.0 383.2,542.0 395.4,542.6 407.7,555.1 419.9,485.9 432.1,530.8 444.3,559.7 456.5,560.4 468.7,560.4 480.9,560.4 493.1,560.4 505.3,560.4 517.5,560.4 529.7,560.4 541.9,560.4 554.1,560.4 566.4,560.4 578.6,560.4 590.8,560.4 603.0,560.4 615.2,560.4 627.4,560.4 639.6,560.4 651.8,560.4 664.0,560.4 676.2,560.4 688.4,560.4 700.6,560.4 712.8,560.4 725.0,560.4 737.3,556.0 749.5,512.0 761.7,552.0 773.9,560.4 786.1,510.0 798.3,507.0 810.5,455.0" stroke="#c8a000" stroke-width="1" />
<polyline points="175.7,560.4 187.9,560.4 200.1,560.4 212.3,560.4 224.5,560.4 236.7,558.8 249.0,558.7 261.2,555.9 273.4,559.8 285.6,560.4 297.8,560.4 310.0,560.4 322.2,560.4 334.4,560.1 346.6,554.6 358.8,527.5 371.0,530.6 383.2,524.4 395.4,559.1 407.7,555.8 419.9,549.2 432.1,554.4 444.3,555.5 456.5,560.4 468.7,555.5 480.9,436.3 493.1,560.4 505.3,560.4 517.5,560.4 529.7,560.4 541.9,560.4 554.1,560.4 566.4,560.4 578.6,559.1 590.8,548.0 603.0,520.0 615.2,487.0 627.4,520.0 639.6,540.0 651.8,560.4 664.0,560.4 676.2,560.4 688.4,556.7 700.6,560.4 712.8,560.4 725.0,560.4 737.3,560.4 749.5,560.4 761.7,560.4 773.9,560.4 786.1,560.4 798.3,558.8 810.5,558.1" stroke="#c88c00" stroke-width="1" />
<polyline points="175.7,560.4 187.9,560.4 200.1,560.4 212.3,560.4 224.5,560.4 236.7,537.4 249.0,543.6 261.2,559.7 273.4,559.1 285.6,560.4 297.8,560.4 310.0,560.4 322.2,560.4 334.4,560.2 346.6,557.0 358.8,432.0 371.0,437.0 383.2,440.0 395.4,433.0 407.7,434.0 419.9,470.0 432.1,520.0 444.3,557.2 456.5,560.4 468.7,560.4 480.9,560.4 493.1,560.4 505.3,560.4 517.5,560.4 529.7,560.4 541.9,560.4 554.1,560.4 566.4,560.4 578.6,560.4 590.8,462.0 603.0,560.4 615.2,558.0 627.4,560.4 639.6,560.1 651.8,556.0 664.0,500.0 676.2,318.0 688.4,400.0 700.6,546.0 712.8,534.6 725.0,551.3 737.3,560.4 749.5,554.5 761.7,560.1 773.9,560.4 786.1,560.4 798.3,560.4 810.5,560.4" stroke="#c87800" stroke-width="1" />
<polyline points="175.7,560.4 187.9,560.4 200.1,560.4 212.3,560.4 224.5,560.4 236.7,547.6 249.0,543.5 261.2,556.4 273.4,559.4 285.6,560.4 297.8,560.4 310.0,560.4 322.2,560.4 334.4,559.4 346.6,553.9 358.8,548.9 371.0,470.4 383.2,537.8 395.4,548.8 407.7,522.4 419.9,476.3 432.1,555.6 444.3,557.0 456.5,560.4 468.7,560.4 480.9,560.4 493.1,560.4 505.3,560.4 517.5,560.4 529.7,560.4 541.9,560.4 554.1,560.4 566.4,560.4 578.6,560.4 590.8,560.4 603.0,560.4 615.2,560.4 627.4,560.4 639.6,560.4 651.8,552.6 664.0,559.6 676.2,560.4 688.4,560.4 700.6,560.4 712.8,553.5 725.0,560.4 737.3,560.4 749.5,560.4 761.7,559.3 773.9,557.0 786.1,510.0 798.3,300.0 810.5,215.0" stroke="#c86800" stroke-width="1" />
<polyline points="175.7,560.4 187.9,560.4 200.1,560.4 212.3,560.4 224.5,560.4 236.7,550.0 249.0,558.0 261.2,554.2 273.4,558.7 285.6,560.4 297.8,560.4 310.0,560.4 322.2,560.4 334.4,559.5 346.6,516.8 358.8,558.8 371.0,481.7 383.2,508.0 395.4,525.0 407.7,530.4 419.9,521.2 432.1,537.4 444.3,557.6 456.5,559.4 468.7,560.4 480.9,548.1 493.1,558.7 505.3,560.4 517.5,560.4 529.7,557.0 541.9,560.4 554.1,560.4 566.4,560.4 578.6,560.4 590.8,560.4 603.0,560.4 615.2,552.6 627.4,550.9 639.6,560.4 651.8,560.4 664.0,560.4 676.2,560.4 688.4,560.4 700.6,560.4 712.8,560.4 725.0,560.4 737.3,560.4 749.5,560.4 761.7,560.4 773.9,560.4 786.1,560.4 798.3,560.4 810.5,560.4" stroke="#c85800" stroke-width="1" />
<polyline points="175.7,560.4 187.9,560.4 200.1,560.4 212.3,560.4 224.5,560.4 236.7,544.4 249.0,540.4 261.2,552.3 273.4,559.2 285.6,560.4 297.8,560.4 310.0,560.4 322.2,560.4 334.4,560.0 346.6,554.2 358.8,545.4 371.0,552.7 383.2,413.3 395.4,537.9 407.7,486.9 419.9,529.6 432.1,538.8 444.3,556.4 456.5,560.4 468.7,560.4 480.9,560.4 493.1,560.4 505.3,560.4 517.5,560.4 529.7,560.4 541.9,560.4 554.1,560.4 566.4,560.4 578.6,560.4 590.8,560.4 603.0,560.4 615.2,560.4 627.4,560.4 639.6,560.3 651.8,560.4 664.0,547.6 676.2,560.4 688.4,560.4 700.6,557.2 712.8,560.4 725.0,560.4 737.3,560.4 749.5,560.4 761.7,560.4 773.9,560.4 786.1,560.4 798.3,560.4 810.5,560.4" stroke="#c84824" stroke-width="1" />
<polyline points="175.7,560.4 187.9,560.4 200.1,560.4 212.3,560.4 224.5,560.4 236.7,554.8 249.0,559.3 261.2,559.8 273.4,560.2 285.6,560.4 297.8,560.4 310.0,560.4 322.2,560.4 334.4,555.5 346.6,547.8 358.8,408.1 371.0,484.2 383.2,532.8 395.4,539.7 407.7,548.7 419.9,470.4 432.1,542.8 444.3,558.4 456.5,560.4 468.7,560.4 480.9,560.4 493.1,560.4 505.3,560.4 517.5,560.4 529.7,557.2 541.9,560.4 554.1,560.4 566.4,560.4 578.6,560.4 590.8,560.4 603.0,560.4 615.2,553.6 627.4,560.4 639.6,560.4 651.8,560.4 664.0,560.4 676.2,560.4 688.4,560.4 700.6,560.4 712.8,560.4 725.0,560.4 737.3,560.4 749.5,560.4 761.7,560.4 773.9,560.4 786.1,560.4 798.3,560.4 810.5,560.4" stroke="#b83020" stroke-width="1" />
<polyline points="175.7,560.4 187.9,560.4 200.1,560.4 212.3,560.4 224.5,560.4 236.7,555.1 249.0,543.9 261.2,556.5 273.4,560.2 285.6,560.4 297.8,560.4 310.0,560.4 322.2,560.4 334.4,559.2 346.6,523.3 358.8,548.5 371.0,440.0 383.2,392.0 395.4,450.0 407.7,480.0 419.9,546.6 432.1,511.0 444.3,551.3 456.5,560.4 468.7,560.4 480.9,560.4 493.1,560.4 505.3,560.4 517.5,552.0 529.7,536.0 541.9,533.0 554.1,540.0 566.4,555.0 578.6,560.4 590.8,450.5 603.0,500.0 615.2,420.0 627.4,336.0 639.6,539.0 651.8,447.0 664.0,520.0 676.2,556.0 688.4,560.4 700.6,560.4 712.8,560.4 725.0,560.4 737.3,553.0 749.5,560.4 761.7,551.0 773.9,560.4 786.1,560.4 798.3,559.2 810.5,560.4" stroke="#a01818" stroke-width="1" />
<polyline points="175.7,560.4 187.9,560.4 200.1,560.4 212.3,560.4 224.5,560.4 236.7,532.4 249.0,552.5 261.2,559.2 273.4,559.9 285.6,560.4 297.8,560.4 310.0,560.4 322.2,560.4 334.4,557.3 346.6,539.9 358.8,528.8 371.0,538.7 383.2,535.5 395.4,528.5 407.7,490.9 419.9,547.2 432.1,451.7 444.3,558.5 456.5,560.4 468.7,555.2 480.9,560.4 493.1,560.4 505.3,560.4 517.5,560.4 529.7,560.4 541.9,560.4 554.1,560.4 566.4,550.0 578.6,540.0 590.8,513.0 603.0,500.0 615.2,540.0 627.4,558.8 639.6,560.4 651.8,560.2 664.0,560.4 676.2,560.4 688.4,560.4 700.6,560.4 712.8,560.4 725.0,560.4 737.3,559.0 749.5,560.4 761.7,560.4 773.9,560.4 786.1,560.4 798.3,560.4 810.5,558.7" stroke="#0040d0" stroke-width="1" />
<polyline points="175.7,560.4 187.9,560.4 200.1,560.4 212.3,560.4 224.5,560.4 236.7,539.9 249.0,545.8 261.2,552.4 273.4,559.7 285.6,560.4 297.8,560.4 310.0,560.4 322.2,560.4 334.4,559.4 346.6,549.7 358.8,531.7 371.0,493.4 383.2,537.9 395.4,535.6 407.7,545.2 419.9,553.8 432.1,545.1 444.3,558.6 456.5,560.4 468.7,560.4 480.9,560.4 493.1,560.4 505.3,557.5 517.5,560.4 529.7,560.4 541.9,560.4 554.1,560.4 566.4,550.9 578.6,560.4 590.8,560.4 603.0,560.4 615.2,560.4 627.4,560.4 639.6,560.4 651.8,560.4 664.0,560.4 676.2,560.4 688.4,560.4 700.6,560.4 712.8,560.4 725.0,560.4 737.3,560.4 749.5,558.7 761.7,558.8 773.9,560.4 786.1,560.4 798.3,560.4 810.5,560.4" stroke="#0070d0" stroke-width="1" />
<polyline points="175.7,560.4 187.9,560.4 200.1,560.4 212.3,560.4 224.5,560.4 236.7,539.7 249.0,554.5 261.2,544.7 273.4,559.6 285.6,560.4 297.8,560.4 310.0,560.4 322.2,560.4 334.4,559.5 346.6,539.2 358.8,557.7 371.0,548.5 383.2,538.4 395.4,471.7 407.7,507.4 419.9,513.5 432.1,537.3 444.3,554.9 456.5,560.4 468.7,560.4 480.9,560.4 493.1,560.4 505.3,549.0 517.5,560.1 529.7,553.7 541.9,560.3 554.1,560.4 566.4,560.4 578.6,560.4 590.8,560.4 603.0,542.4 615.2,560.4 627.4,560.4 639.6,560.4 651.8,560.4 664.0,560.4 676.2,558.5 688.4,528.6 700.6,560.4 712.8,560.4 725.0,552.6 737.3,560.4 749.5,560.4 761.7,560.4 773.9,560.4 786.1,560.4 798.3,560.4 810.5,560.4" stroke="#0098d0" stroke-width="1" />
<polyline points="175.7,560.4 187.9,560.4 200.1,560.4 212.3,560.4 224.5,560.4 236.7,551.8 249.0,556.6 261.2,555.9 273.4,559.0 285.6,560.4 297.8,560.4 310.0,560.4 322.2,560.4 334.4,556.1 346.6,542.7 358.8,559.9 371.0,546.3 383.2,378.0 395.4,470.0 407.7,377.0 419.9,480.0 432.1,550.8 444.3,559.9 456.5,560.4 468.7,432.7 480.9,497.0 493.1,495.6 505.3,556.0 517.5,560.4 529.7,560.4 541.9,560.4 554.1,560.4 566.4,560.4 578.6,560.4 590.8,560.4 603.0,560.4 615.2,560.4 627.4,560.4 639.6,560.4 651.8,560.4 664.0,560.4 676.2,560.4 688.4,560.4 700.6,560.4 712.8,560.4 725.0,560.4 737.3,559.7 749.5,560.4 761.7,558.2 773.9,560.4 786.1,560.4 798.3,560.4 810.5,560.4" stroke="#00b4c8" stroke-width="1" />
<polyline points="175.7,560.4 187.9,560.4 200.1,560.4 212.3,560.4 224.5,560.4 236.7,554.7 249.0,557.6 261.2,559.0 273.4,560.2 285.6,560.4 297.8,560.4 310.0,560.4 322.2,560.4 334.4,555.4 346.6,555.7 358.8,541.2 371.0,508.3 383.2,544.7 395.4,529.8 407.7,484.7 419.9,546.8 432.1,548.0 444.3,558.4 456.5,560.4 468.7,560.4 480.9,560.4 493.1,560.4 505.3,544.2 517.5,556.3 529.7,560.4 541.9,560.4 554.1,560.4 566.4,560.4 578.6,560.4 590.8,540.0 603.0,492.0 615.2,504.0 627.4,492.0 639.6,507.0 651.8,530.0 664.0,545.0 676.2,559.5 688.4,560.4 700.6,560.4 712.8,556.3 725.0,560.4 737.3,560.4 749.5,560.4 761.7,560.4 773.9,560.4 786.1,560.4 798.3,560.4 810.5,560.4" stroke="#00b488" stroke-width="1" />
<polyline points="175.7,560.4 187.9,560.4 200.1,560.4 212.3,560.4 224.5,560.4 236.7,542.5 249.0,556.1 261.2,554.3 273.4,560.3 285.6,560.4 297.8,560.4 310.0,560.4 322.2,560.4 334.4,555.4 346.6,496.4 358.8,541.0 371.0,526.6 383.2,552.2 395.4,528.0 407.7,486.1 419.9,550.7 432.1,514.9 444.3,558.1 456.5,560.4 468.7,560.4 480.9,474.7 493.1,536.0 505.3,520.0 517.5,492.0 529.7,540.0 541.9,556.0 554.1,560.4 566.4,560.4 578.6,560.4 590.8,455.0 603.0,520.0 615.2,500.0 627.4,376.0 639.6,529.0 651.8,523.0 664.0,540.0 676.2,558.0 688.4,560.4 700.6,560.4 712.8,560.4 725.0,560.4 737.3,546.3 749.5,554.5 761.7,556.0 773.9,500.0 786.1,400.0 798.3,168.0 810.5,330.0" stroke="#00b058" stroke-width="1" />
<polyline points="175.7,560.4 187.9,560.4 200.1,560.4 212.3,560.4 224.5,560.4 236.7,537.5 249.0,548.9 261.2,555.5 273.4,560.1 285.6,560.4 297.8,560.4 310.0,560.4 322.2,560.4 334.4,558.7 346.6,538.7 358.8,490.9 371.0,525.6 383.2,522.0 395.4,540.7 407.7,522.2 419.9,519.3 432.1,553.1 444.3,555.6 456.5,560.4 468.7,560.4 480.9,560.4 493.1,560.4 505.3,560.4 517.5,560.4 529.7,508.5 541.9,540.0 554.1,558.0 566.4,560.4 578.6,560.4 590.8,560.4 603.0,560.4 615.2,560.4 627.4,560.4 639.6,558.8 651.8,560.4 664.0,543.3 676.2,556.1 688.4,560.4 700.6,560.4 712.8,560.4 725.0,560.4 737.3,560.4 749.5,560.4 761.7,560.4 773.9,560.4 786.1,560.4 798.3,560.4 810.5,560.4" stroke="#00b830" stroke-width="1" />
<polyline points="175.7,560.4 187.9,560.4 200.1,560.4 212.3,560.4 224.5,560.4 236.7,559.2 249.0,516.0 261.2,559.0 273.4,559.7 285.6,560.4 297.8,560.4 310.0,560.4 322.2,560.4 334.4,559.9 346.6,557.7 358.8,541.8 371.0,535.5 383.2,408.1 395.4,542.8 407.7,433.2 419.9,525.8 432.1,493.5 444.3,555.0 456.5,560.4 468.7,560.4 480.9,560.4 493.1,560.4 505.3,560.4 517.5,557.0 529.7,554.7 541.9,560.4 554.1,560.4 566.4,560.4 578.6,560.4 590.8,560.4 603.0,560.4 615.2,556.2 627.4,560.4 639.6,560.4 651.8,560.4 664.0,560.4 676.2,560.4 688.4,558.5 700.6,560.4 712.8,560.4 725.0,560.4 737.3,560.4 749.5,560.4 761.7,560.4 773.9,560.4 786.1,560.4 798.3,560.4 810.5,560.4" stroke="#00c010" stroke-width="1" />
<polyline points="175.7,560.4 187.9,560.4 200.1,560.4 212.3,560.4 224.5,560.4 236.7,537.2 249.0,547.1 261.2,558.6 273.4,560.1 285.6,560.4 297.8,560.4 310.0,560.4 322.2,560.4 334.4,559.8 346.6,546.3 358.8,477.8 371.0,521.6 383.2,537.0 395.4,527.8 407.7,553.5 419.9,504.7 432.1,553.5 444.3,559.4 456.5,560.4 468.7,560.4 480.9,560.4 493.1,542.1 505.3,551.3 517.5,560.4 529.7,560.4 541.9,560.4 554.1,560.4 566.4,560.4 578.6,542.2 590.8,550.1 603.0,560.4 615.2,560.4 627.4,560.4 639.6,556.1 651.8,542.0 664.0,551.5 676.2,560.4 688.4,560.4 700.6,560.4 712.8,560.4 725.0,560.4 737.3,560.4 749.5,560.4 761.7,560.4 773.9,555.0 786.1,560.4 798.3,472.9 810.5,560.4" stroke="#10c800" stroke-width="1" />
<polyline points="175.7,560.4 187.9,560.4 200.1,560.4 212.3,560.4 224.5,560.4 236.7,549.4 249.0,547.3 261.2,557.7 273.4,559.6 285.6,560.4 297.8,560.4 310.0,560.4 322.2,560.4 334.4,559.6 346.6,555.8 358.8,500.5 371.0,542.1 383.2,442.7 395.4,548.5 407.7,550.9 419.9,528.4 432.1,536.7 444.3,559.9 456.5,560.4 468.7,558.7 480.9,560.4 493.1,548.0 505.3,560.4 517.5,558.8 529.7,560.4 541.9,560.4 554.1,560.4 566.4,560.4 578.6,560.4 590.8,560.4 603.0,560.4 615.2,560.4 627.4,560.4 639.6,560.4 651.8,558.9 664.0,560.4 676.2,560.4 688.4,560.4 700.6,560.4 712.8,560.4 725.0,560.4 737.3,560.4 749.5,560.4 761.7,560.4 773.9,560.4 786.1,558.3 798.3,560.4 810.5,560.4" stroke="#c8c000" stroke-width="1" />
<polyline points="175.7,237.0 187.9,229.0 200.1,221.0 212.3,222.0 224.5,229.0 236.7,243.0 249.0,254.0 261.2,259.0 273.4,264.0 285.6,259.0 297.8,240.0 310.0,223.0 322.2,222.0 334.4,218.0 346.6,238.0 358.8,262.0 371.0,264.0 383.2,285.0 395.4,319.0 407.7,329.0 419.9,327.0 432.1,317.0 444.3,315.6 456.5,338.0 468.7,342.0 480.9,345.3 493.1,345.3 505.3,347.6 517.5,352.0 529.7,344.7 541.9,337.5 554.1,328.8 566.4,311.4 578.6,320.0 590.8,339.0 603.0,340.4 615.2,321.5 627.4,286.7 639.6,262.6 651.8,251.0 664.0,276.2 676.2,297.5 688.4,303.3 700.6,313.0 712.8,319.6 725.0,315.0 737.3,313.0 749.5,293.6 761.7,283.2 773.9,291.7 786.1,295.6 798.3,302.5 810.5,307.2" stroke="#0606fa" stroke-width="3.2" />
<polyline points="175.7,560.4 187.9,560.4 200.1,560.4 212.3,560.4 224.5,560.4 236.7,538.0 249.0,552.0 261.2,557.0 273.4,560.4 285.6,560.4 297.8,560.4 310.0,560.4 322.2,560.4 334.4,560.4 346.6,558.5 358.8,552.0 371.0,549.0 383.2,426.3 395.4,432.7 407.7,545.6 419.9,558.5 432.1,560.4 444.3,560.4 456.5,560.4 468.7,560.4 480.9,560.4 493.1,560.4 505.3,560.4 517.5,560.4 529.7,560.4 541.9,560.4 554.1,560.4 566.4,560.4 578.6,560.4 590.8,560.4 603.0,560.4 615.2,560.4 627.4,560.4 639.6,560.4 651.8,560.4 664.0,560.4 676.2,560.4 688.4,560.4 700.6,560.4 712.8,560.4 725.0,560.4 737.3,560.4 749.5,560.4 761.7,560.4 773.9,560.4 786.1,548.0 798.3,540.0 810.5,534.0" stroke="#0606fa" stroke-width="3.2" />
<polyline points="175.7,237.4 187.9,229.0 200.1,222.0 212.3,221.6 224.5,227.0 236.7,241.0 249.0,252.0 261.2,260.0 273.4,267.0 285.6,261.0 297.8,239.0 310.0,222.0 322.2,217.0 334.4,222.0 346.6,240.0 358.8,256.0 371.0,265.0 383.2,279.0 395.4,295.0 407.7,313.0 419.9,321.0 432.1,324.0 444.3,324.4 456.5,329.0 468.7,333.6 480.9,331.1 493.1,329.1 505.3,327.3 517.5,322.1 529.7,317.8 541.9,314.6 554.1,315.7 566.4,315.7 578.6,313.7 590.8,312.8 603.0,312.3 615.2,312.3 627.4,306.2 639.6,302.5 651.8,302.1 664.0,302.5 676.2,303.3 688.4,303.3 700.6,305.2 712.8,307.2 725.0,307.2 737.3,307.2 749.5,305.2 761.7,302.5 773.9,299.4 786.1,296.3 798.3,292.5 810.5,289.7" stroke="#f4f4f4" stroke-width="3.1" />
<polyline points="175.7,560.4 187.9,560.4 200.1,560.4 212.3,560.4 224.5,560.4 236.7,544.0 249.0,549.0 261.2,555.0 273.4,559.6 285.6,560.4 297.8,560.4 310.0,560.4 322.2,559.9 334.4,558.5 346.6,545.6 358.8,529.5 371.0,512.7 383.2,512.7 395.4,519.0 407.7,518.0 419.9,528.0 432.1,544.0 444.3,555.3 456.5,557.0 468.7,556.3 480.9,556.0 493.1,557.0 505.3,557.0 517.5,557.5 529.7,557.0 541.9,557.0 554.1,553.0 566.4,551.5 578.6,549.5 590.8,545.6 603.0,549.0 615.2,545.6 627.4,541.0 639.6,555.0 651.8,553.0 664.0,553.0 676.2,547.0 688.4,551.5 700.6,558.0 712.8,558.0 725.0,558.3 737.3,558.3 749.5,558.0 761.7,557.8 773.9,555.0 786.1,550.5 798.3,541.0 810.5,536.0" stroke="#f4f4f4" stroke-width="3.1" />
<polyline points="175.7,237.0 187.9,228.0 200.1,221.0 212.3,225.0 224.5,236.0 236.7,252.0 249.0,269.0 261.2,277.0 273.4,279.0 285.6,277.0 297.8,240.0 310.0,211.6 322.2,207.0 334.4,201.0 346.6,236.0 358.8,266.0 371.0,274.0 383.2,256.0 395.4,244.0 407.7,310.0 419.9,334.0 432.1,327.0 444.3,337.0 456.5,348.0 468.7,357.0 480.9,346.2 493.1,346.2 505.3,337.5 517.5,325.0 529.7,322.4 541.9,321.5 554.1,323.0 566.4,328.8 578.6,333.1 590.8,337.5 603.0,333.1 615.2,323.0 627.4,306.2 639.6,322.7 651.8,340.0 664.0,340.9 676.2,339.0 688.4,330.4 700.6,322.7 712.8,318.0 725.0,309.0 737.3,305.2 749.5,322.7 761.7,344.0 773.9,345.0 786.1,344.0 798.3,344.4 810.5,345.0" stroke="#10dc10" stroke-width="3.1" />
<polyline points="175.7,560.4 187.9,560.4 200.1,560.4 212.3,560.4 224.5,560.4 236.7,506.0 249.0,540.0 261.2,554.0 273.4,560.4 285.6,560.4 297.8,560.4 310.0,560.4 322.2,560.4 334.4,560.4 346.6,481.0 358.8,524.7 371.0,405.3 383.2,452.0 395.4,489.0 407.7,423.0 419.9,413.4 432.1,532.7 444.3,558.0 456.5,560.4 468.7,560.4 480.9,560.4 493.1,560.4 505.3,560.4 517.5,560.4 529.7,560.4 541.9,560.4 554.1,560.4 566.4,550.5 578.6,526.0 590.8,553.7 603.0,555.0 615.2,558.0 627.4,545.6 639.6,470.0 651.8,130.0 664.0,388.0 676.2,475.0 688.4,525.0 700.6,560.4 712.8,560.4 725.0,560.4 737.3,560.4 749.5,560.4 761.7,560.4 773.9,560.4 786.1,560.4 798.3,560.4 810.5,560.4" stroke="#10dc10" stroke-width="3.1" />
<polyline points="175.7,263.0 187.9,258.0 200.1,255.6 212.3,254.6 224.5,255.0 236.7,255.2 249.0,254.0 261.2,255.6 273.4,255.2 285.6,252.6 297.8,254.0 310.0,255.0 322.2,261.0 334.4,260.6 346.6,260.4 358.8,261.6 371.0,262.0 383.2,259.0 395.4,257.6 407.7,258.0 419.9,255.0 432.1,254.0 444.3,252.6 456.5,253.6 468.7,255.0 480.9,253.4 493.1,256.3 505.3,254.8 517.5,259.2 529.7,261.2 541.9,262.6 554.1,265.0 566.4,263.5 578.6,262.6 590.8,265.0 603.0,267.0 615.2,269.3 627.4,267.9 639.6,268.4 651.8,271.2 664.0,272.3 676.2,272.3 688.4,266.5 700.6,263.8 712.8,262.6 725.0,261.5 737.3,257.6 749.5,261.5 761.7,258.8 773.9,256.0 786.1,254.5 798.3,255.3 810.5,256.8" stroke="#e63c3c" stroke-width="3.5" stroke-opacity="0.92"/>
<polyline points="175.7,263.0 187.9,258.0 200.1,255.6 212.3,254.6 224.5,255.0 236.7,255.2 249.0,254.0 261.2,255.6 273.4,255.2 285.6,252.6 297.8,254.0 310.0,255.0 322.2,261.0 334.4,260.6 346.6,260.4 358.8,261.6 371.0,262.0 383.2,259.0 395.4,257.6 407.7,258.0 419.9,255.0 432.1,254.0 444.3,252.6 456.5,253.6 468.7,255.0 480.9,253.4 493.1,256.3 505.3,254.8 517.5,259.2 529.7,261.2 541.9,262.6 554.1,265.0 566.4,263.5 578.6,262.6 590.8,265.0 603.0,267.0 615.2,269.3 627.4,267.9 639.6,268.4 651.8,271.2 664.0,272.3 676.2,272.3 688.4,266.5 700.6,263.8 712.8,262.6 725.0,261.5 737.3,257.6 749.5,261.5 761.7,258.8 773.9,256.0 786.1,254.5 798.3,255.3 810.5,256.8" stroke="#ff5858" stroke-width="1.2" stroke-opacity="0.6"/>
</g>
<rect x="163.5" y="30.5" width="647.0" height="530.0" fill="none" stroke="#f0f0f0" stroke-width="1"/>
<g stroke="#fff" stroke-width="1"><line x1="805.0" y1="560.5" x2="810.5" y2="560.5"/><line x1="807.5" y1="547.5" x2="810.5" y2="547.5"/><line x1="805.0" y1="533.5" x2="810.5" y2="533.5"/><line x1="807.5" y1="520.5" x2="810.5" y2="520.5"/><line x1="805.0" y1="507.5" x2="810.5" y2="507.5"/><line x1="807.5" y1="494.5" x2="810.5" y2="494.5"/><line x1="805.0" y1="480.5" x2="810.5" y2="480.5"/><line x1="807.5" y1="467.5" x2="810.5" y2="467.5"/><line x1="805.0" y1="454.5" x2="810.5" y2="454.5"/><line x1="807.5" y1="441.5" x2="810.5" y2="441.5"/><line x1="805.0" y1="427.5" x2="810.5" y2="427.5"/><line x1="807.5" y1="414.5" x2="810.5" y2="414.5"/><line x1="805.0" y1="401.5" x2="810.5" y2="401.5"/><line x1="807.5" y1="388.5" x2="810.5" y2="388.5"/><line x1="805.0" y1="374.5" x2="810.5" y2="374.5"/><line x1="807.5" y1="361.5" x2="810.5" y2="361.5"/><line x1="805.0" y1="348.5" x2="810.5" y2="348.5"/><line x1="807.5" y1="335.5" x2="810.5" y2="335.5"/><line x1="805.0" y1="321.5" x2="810.5" y2="321.5"/><line x1="807.5" y1="308.5" x2="810.5" y2="308.5"/><line x1="805.0" y1="295.5" x2="810.5" y2="295.5"/><line x1="807.5" y1="282.5" x2="810.5" y2="282.5"/><line x1="805.0" y1="268.5" x2="810.5" y2="268.5"/><line x1="807.5" y1="255.5" x2="810.5" y2="255.5"/><line x1="805.0" y1="242.5" x2="810.5" y2="242.5"/><line x1="807.5" y1="229.5" x2="810.5" y2="229.5"/><line x1="805.0" y1="215.5" x2="810.5" y2="215.5"/><line x1="807.5" y1="202.5" x2="810.5" y2="202.5"/><line x1="805.0" y1="189.5" x2="810.5" y2="189.5"/><line x1="807.5" y1="176.5" x2="810.5" y2="176.5"/><line x1="805.0" y1="162.5" x2="810.5" y2="162.5"/><line x1="807.5" y1="149.5" x2="810.5" y2="149.5"/><line x1="805.0" y1="136.5" x2="810.5" y2="136.5"/><line x1="807.5" y1="123.5" x2="810.5" y2="123.5"/><line x1="805.0" y1="109.5" x2="810.5" y2="109.5"/><line x1="807.5" y1="96.5" x2="810.5" y2="96.5"/><line x1="805.0" y1="83.5" x2="810.5" y2="83.5"/><line x1="807.5" y1="70.5" x2="810.5" y2="70.5"/><line x1="805.0" y1="56.5" x2="810.5" y2="56.5"/><line x1="807.5" y1="43.5" x2="810.5" y2="43.5"/><line x1="805.0" y1="30.5" x2="810.5" y2="30.5"/></g>
<g fill="#fff" font-family="'DejaVu Sans', 'Liberation Sans', sans-serif" font-size="10.27px">
<text x="152.8" y="563.6" text-anchor="end">-30</text>
<text x="152.8" y="515.4" text-anchor="end">-25</text>
<text x="152.8" y="467.3" text-anchor="end">-20</text>
<text x="152.8" y="419.1" text-anchor="end">-15</text>
<text x="152.8" y="370.9" text-anchor="end">-10</text>
<text x="152.8" y="322.7" text-anchor="end">-5</text>
<text x="152.8" y="274.6" text-anchor="end">0</text>
<text x="152.8" y="226.4" text-anchor="end">5</text>
<text x="152.8" y="178.2" text-anchor="end">10</text>
<text x="152.8" y="130.0" text-anchor="end">15</text>
<text x="152.8" y="81.9" text-anchor="end">20</text>
<text x="152.8" y="33.7" text-anchor="end">25</text>
<text x="817" y="563.6">0</text>
<text x="817" y="431.1">10</text>
<text x="817" y="298.6">20</text>
<text x="817" y="166.2">30</text>
<text x="817" y="33.7">40</text>
<text x="162.1" y="579" text-anchor="middle">21Nov 00z</text>
<text x="259.8" y="579" text-anchor="middle">23Nov 00z</text>
<text x="357.4" y="579" text-anchor="middle">25Nov 00z</text>
<text x="455.1" y="579" text-anchor="middle">27Nov 00z</text>
<text x="552.7" y="579" text-anchor="middle">29Nov 00z</text>
<text x="650.4" y="579" text-anchor="middle">01Dec 00z</text>
<text x="748.1" y="579" text-anchor="middle">03Dec 00z</text>
<text x="485.6" y="596.8" text-anchor="middle">Date (UTC)</text>
<text transform="translate(134.4,297.6) rotate(-90)" text-anchor="middle">850 hPa Temp. (°C)</text>
<text transform="translate(843.2,296.5) rotate(-90)" text-anchor="middle">Precipitation (mm)</text>
</g>
<text x="434.3" y="17.7" text-anchor="middle" fill="#fff" font-family="'DejaVu Sans', 'Liberation Sans', sans-serif" font-weight="bold" font-size="16px" xml:space="preserve">Bucharest  (RO)  850 hPa Temp. &amp; Precipitation | Tue, 21Nov2023 00Z</text>
<g fill="#f0f0f0" font-family="'DejaVu Sans', 'Liberation Sans', sans-serif" font-size="16px"><text x="120.6" y="604.7">GFS Ensemble, 44.5N, 26E</text><text x="650.3" y="604.7">Wetterzentrale.de</text></g>
<g stroke-width="2"><line x1="0" y1="43.9" x2="6.8" y2="43.9" stroke="#0020d0"/><line x1="54" y1="43.9" x2="64.8" y2="43.9" stroke="#0048d0"/><line x1="0" y1="61.9" x2="6.8" y2="61.9" stroke="#0070d0"/><line x1="54" y1="61.9" x2="64.8" y2="61.9" stroke="#0098d0"/><line x1="0" y1="79.9" x2="6.8" y2="79.9" stroke="#00b4c4"/><line x1="54" y1="79.9" x2="64.8" y2="79.9" stroke="#00b088"/><line x1="0" y1="97.9" x2="6.8" y2="97.9" stroke="#00b058"/><line x1="54" y1="97.9" x2="64.8" y2="97.9" stroke="#00b834"/><line x1="0" y1="115.9" x2="6.8" y2="115.9" stroke="#00c018"/><line x1="54" y1="115.9" x2="64.8" y2="115.9" stroke="#18c800"/><line x1="0" y1="133.9" x2="6.8" y2="133.9" stroke="#c8c800"/><line x1="54" y1="133.9" x2="64.8" y2="133.9" stroke="#c8b400"/><line x1="0" y1="151.9" x2="6.8" y2="151.9" stroke="#c8a000"/><line x1="54" y1="151.9" x2="64.8" y2="151.9" stroke="#c88c00"/><line x1="0" y1="169.9" x2="6.8" y2="169.9" stroke="#c87800"/><line x1="54" y1="169.9" x2="64.8" y2="169.9" stroke="#c86800"/><line x1="0" y1="187.9" x2="6.8" y2="187.9" stroke="#c85800"/><line x1="54" y1="187.9" x2="64.8" y2="187.9" stroke="#c84824"/><line x1="0" y1="205.9" x2="6.8" y2="205.9" stroke="#b83020"/><line x1="54" y1="205.9" x2="64.8" y2="205.9" stroke="#a01818"/><line x1="0" y1="223.9" x2="6.8" y2="223.9" stroke="#0040d0"/><line x1="54" y1="223.9" x2="64.8" y2="223.9" stroke="#0070d0"/><line x1="0" y1="241.9" x2="6.8" y2="241.9" stroke="#0098d0"/><line x1="54" y1="241.9" x2="64.8" y2="241.9" stroke="#00b4c8"/><line x1="0" y1="259.9" x2="6.8" y2="259.9" stroke="#00b488"/><line x1="54" y1="259.9" x2="64.8" y2="259.9" stroke="#00b058"/><line x1="0" y1="277.9" x2="6.8" y2="277.9" stroke="#00b830"/><line x1="54" y1="277.9" x2="64.8" y2="277.9" stroke="#00c010"/><line x1="0" y1="295.9" x2="6.8" y2="295.9" stroke="#10c800"/><line x1="54" y1="295.9" x2="64.8" y2="295.9" stroke="#c8c000"/><line x1="0" y1="313.9" x2="6.8" y2="313.9" stroke="#0606fa"/><line x1="54" y1="313.9" x2="64.8" y2="313.9" stroke="#f4f4f4" stroke-width="2.2"/><line x1="54" y1="341.9" x2="64.8" y2="341.9" stroke="#e63c3c" stroke-width="2"/><line x1="0" y1="357" x2="6.8" y2="357" stroke="#0ed60e"/></g>
<g fill="#fff" font-family="'DejaVu Sans', 'Liberation Sans', sans-serif" font-size="10.27px"><text x="7.4" y="45.8">P1</text><text x="65.4" y="45.8">P2</text><text x="7.4" y="63.8">P3</text><text x="65.4" y="63.8">P4</text><text x="7.4" y="81.8">P5</text><text x="65.4" y="81.8">P6</text><text x="7.4" y="99.8">P7</text><text x="65.4" y="99.8">P8</text><text x="7.4" y="117.8">P9</text><text x="65.4" y="117.8">P10</text><text x="7.4" y="135.8">P11</text><text x="65.4" y="135.8">P12</text><text x="7.4" y="153.8">P13</text><text x="65.4" y="153.8">P14</text><text x="7.4" y="171.8">P15</text><text x="65.4" y="171.8">P16</text><text x="7.4" y="189.8">P17</text><text x="65.4" y="189.8">P18</text><text x="7.4" y="207.8">P19</text><text x="65.4" y="207.8">P20</text><text x="7.4" y="225.8">P21</text><text x="65.4" y="225.8">P22</text><text x="7.4" y="243.8">P23</text><text x="65.4" y="243.8">P24</text><text x="7.4" y="261.8">P25</text><text x="65.4" y="261.8">P26</text><text x="7.4" y="279.8">P27</text><text x="65.4" y="279.8">P28</text><text x="7.4" y="297.8">P29</text><text x="65.4" y="297.8">P30</text><text x="7.4" y="315.8">Control</text><text x="65.4" y="315.8">Ens. mean</text><text x="65.4" y="342.8">1991-2020</text><text x="65.4" y="355.6">mean</text><text x="7.4" y="358.5">Oper</text></g>
</svg>
</body></html>
